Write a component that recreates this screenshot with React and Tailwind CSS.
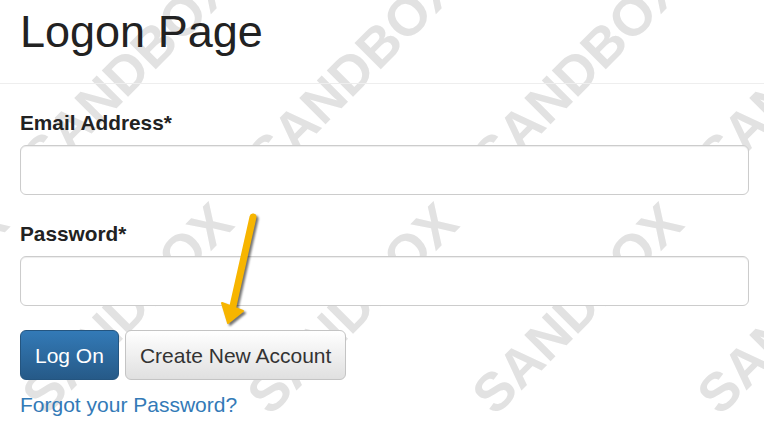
import React from "react";

const cols = [-98, 127, 352, 577, 802];
const rows = [71, 308];

export default function App() {
  return (
    <div
      className="relative w-[764px] h-[428px] overflow-hidden bg-white text-[#333]"
      style={{ fontFamily: '"Liberation Sans", Arial, sans-serif' }}
    >
      {/* SANDBOX watermark */}
      <div className="pointer-events-none absolute inset-0 overflow-hidden">
        {rows.map((y) =>
          cols.map((x) => (
            <span
              key={`${x}-${y}`}
              className="absolute -translate-x-1/2 -translate-y-1/2 -rotate-45 whitespace-nowrap text-[54px] font-bold leading-none text-[#e2e2e2]"
              style={{ left: x, top: y }}
            >
              SANDBOX
            </span>
          ))
        )}
      </div>

      <div className="relative">
        <div className="border-b border-[#eee] pl-[20px] pr-[15px] pt-[7px] pb-[26px]">
          <h1 className="text-[45px] leading-[50px] font-normal text-[#222]">Logon Page</h1>
        </div>

        <div className="pl-[20px] pr-[15px] pt-[24px]">
          <label className="block text-[20.8px] leading-[29px] font-bold text-[#222]">
            Email Address*
          </label>
          <input
            type="text"
            className="mt-[8px] block h-[50px] w-[729px] rounded-[6px] border border-[#ccc] bg-white shadow-[inset_0_1px_1px_rgba(0,0,0,0.075)]"
          />

          <label className="mt-[24px] block text-[20.8px] leading-[29px] font-bold text-[#222]">
            Password*
          </label>
          <input
            type="password"
            className="mt-[8px] block h-[50px] w-[729px] rounded-[6px] border border-[#ccc] bg-white shadow-[inset_0_1px_1px_rgba(0,0,0,0.075)]"
          />

          <div className="mt-[24px] flex gap-[6px]">
            <button className="h-[50px] rounded-[6px] border border-[#245580] bg-gradient-to-b from-[#337ab7] to-[#265a88] px-[14px] text-[21px] leading-none text-white">
              Log On
            </button>
            <button className="h-[50px] rounded-[6px] border border-[#c4c4c4] bg-gradient-to-b from-[#ffffff] to-[#e0e0e0] px-[14px] text-[21px] leading-none text-[#333]">
              Create New Account
            </button>
          </div>

          <a className="mt-[10px] block w-max text-[21px] leading-[29px] text-[#337ab7]" href="#">
            Forgot your Password?
          </a>
        </div>
      </div>

      {/* yellow arrow annotation */}
      <svg
        className="pointer-events-none absolute left-0 top-0 drop-shadow-[2px_2px_1px_rgba(0,0,0,0.55)]"
        width="764"
        height="428"
        viewBox="0 0 764 428"
      >
        <line x1="253" y1="217" x2="233" y2="306" stroke="#f7b500" strokeWidth="7" strokeLinecap="round" />
        <polygon points="222,303 228,323 243,311" fill="#f7b500" stroke="#f7b500" strokeWidth="2" strokeLinejoin="round" />
      </svg>
    </div>
  );
}
